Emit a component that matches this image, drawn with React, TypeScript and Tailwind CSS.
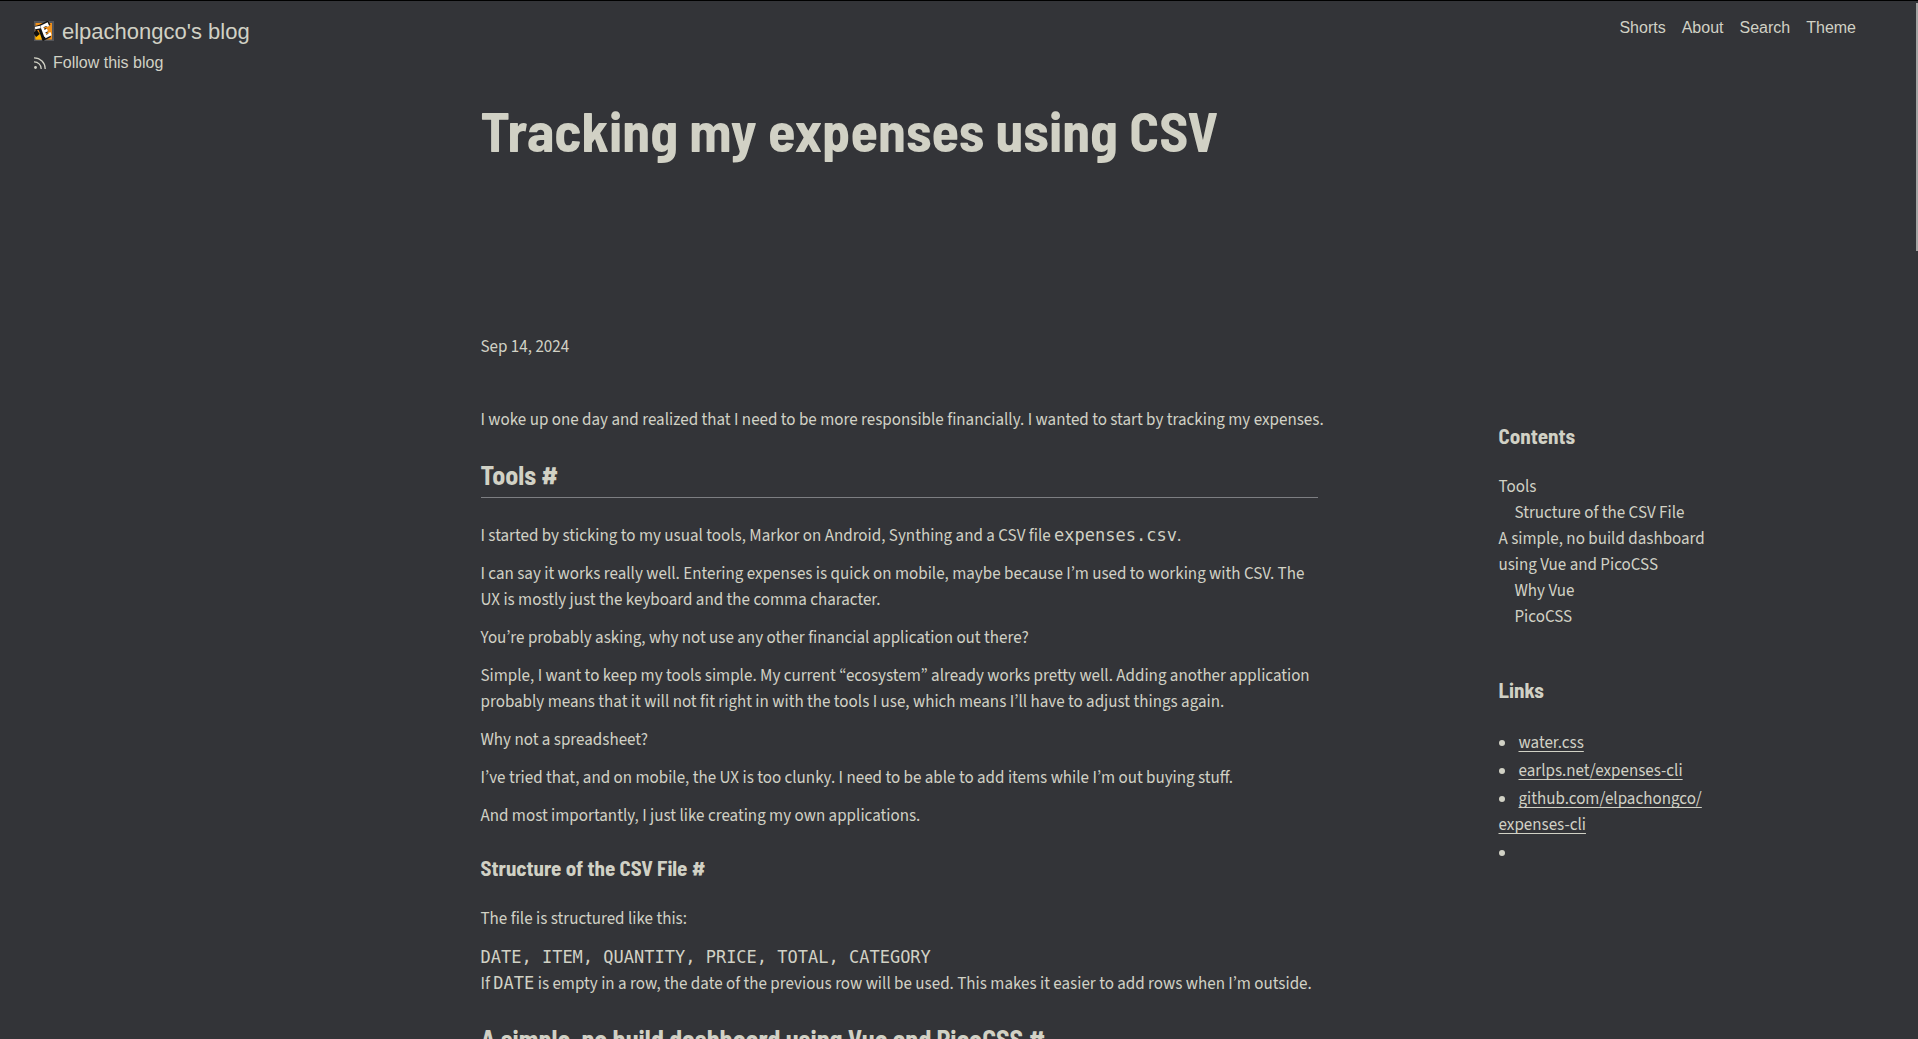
import type { ReactNode } from "react";

const heading = "font-['Barlow_Semi_Condensed','Roboto_Condensed',sans-serif] font-bold";
const mono = "font-['DejaVu_Sans_Mono',monospace]";

const nav = ["Shorts", "About", "Search", "Theme"];

const contents = [
  { label: "Tools", nested: false },
  { label: "Structure of the CSV File", nested: true },
  { label: "A simple, no build dashboard using Vue and PicoCSS", nested: false },
  { label: "Why Vue", nested: true },
  { label: "PicoCSS", nested: true },
];

const links = ["water.css", "earlps.net/expenses-cli", "github.com/elpachongco/\u200bexpenses-cli"];

function Favicon() {
  return (
    <svg viewBox="0 0 20 20" className="size-5" aria-hidden="true">
      <rect width="20" height="20" fill="#55565a" />
      <rect x="1.5" y="2" width="16.5" height="16.5" fill="#f0901a" />
      <path d="M1.5 11h6v7.5h-6z" fill="#ffb400" />
      <g fill="none" strokeLinejoin="miter">
        <path d="M1 7.500l5-1.500 4 11 6-3M6 6l7-3.500 1.500 2.500M8 11.500l5-2.500M1 10.500l3 4" stroke="#111" strokeWidth="4.600" />
        <path d="M1 7l5.500-1M8 6l3.500 9.500M7 6l6-3 1 2.500M9 11l4.500-2M11 16l5-2.500-.5-2" stroke="#fff" strokeWidth="2.600" />
      </g>
    </svg>
  );
}

function RssIcon() {
  return (
    <svg viewBox="0 0 12 12" className="size-3" fill="none" stroke="currentColor" strokeWidth="1.3" aria-hidden="true">
      <path d="M0 0.8A11 11 0 0 1 11.2 12" />
      <path d="M0 4.8A7 7 0 0 1 7.2 12" />
      <circle cx="1.5" cy="10.5" r="1.4" fill="currentColor" stroke="none" />
    </svg>
  );
}

function P({ children }: { children: ReactNode }) {
  return <p className="mb-3">{children}</p>;
}

export default function App() {
  return (
    <div className="relative min-h-screen border-t border-black bg-[#333438] font-['Source_Sans_3','Noto_Sans_CJK_SC',sans-serif] text-[17px] leading-[26px] text-[#d1d1c5]">
      <header className="flex items-start justify-between pt-[15px] pr-[62px] pl-[34px] font-['Liberation_Sans',sans-serif] text-base">
        <div>
          <a href="#home" className="flex h-[30px] items-center gap-2 text-[22px]">
            <Favicon />
            elpachongco's blog
          </a>
          <a href="#follow" className="mt-0.5 flex h-[30px] items-center gap-[7px]">
            <RssIcon />
            Follow this blog
          </a>
        </div>
        <nav className="-mt-[3px] flex gap-4">
          {nav.map((n) => (
            <a key={n} href={`#${n.toLowerCase()}`} className="leading-[30px]">
              {n}
            </a>
          ))}
        </nav>
      </header>

      <div className="ml-px flex items-start pt-[17px] pl-[25%]">
        <main className="w-full max-w-[837px]">
          <h1 className={`${heading} text-[56px] leading-[70px]`}>Tracking my expenses using CSV</h1>
          <p className="mt-[169px]">Sep 14, 2024</p>
          <p className="mt-[47px] whitespace-nowrap">
            I woke up one day and realized that I need to be more responsible financially. I wanted to start by tracking
            my expenses.
          </p>
          <h2 className={`${heading} mt-6 mb-6 border-b border-[#7d7e82] pb-1 text-[26px] leading-9`}>Tools #</h2>
          <P>
            I started by sticking to my usual tools, Markor on Android, Synthing and a CSV file{" "}
            <code className={mono}>expenses.csv</code>.
          </P>
          <P>
            I can say it works really well. Entering expenses is quick on mobile, maybe because I’m used to working with
            CSV. The UX is mostly just the keyboard and the comma character.
          </P>
          <P>You’re probably asking, why not use any other financial application out there?</P>
          <P>
            Simple, I want to keep my tools simple. My current “ecosystem” already works pretty well. Adding another
            application probably means that it will not fit right in with the tools I use, which means I’ll have to
            adjust things again.
          </P>
          <P>Why not a spreadsheet?</P>
          <P>I’ve tried that, and on mobile, the UX is too clunky. I need to be able to add items while I’m out buying stuff.</P>
          <P>And most importantly, I just like creating my own applications.</P>
          <h3 className={`${heading} mt-[26px] mb-[25px] text-[21px] leading-[26px]`}>Structure of the CSV File #</h3>
          <P>The file is structured like this:</P>
          <pre className={mono}>DATE, ITEM, QUANTITY, PRICE, TOTAL, CATEGORY</pre>
          <p>
            If <code className={mono}>DATE</code> is empty in a row, the date of the previous row will be used. This
            makes it easier to add rows when I’m outside.
          </p>
          <h2 className={`${heading} mt-6 border-b border-[#7d7e82] pb-1 text-[26px] leading-9`}>
            A simple, no build dashboard using Vue and PicoCSS #
          </h2>
        </main>

        <aside className="mt-[328px] ml-[181px] w-[216px] shrink-0">
          <h3 className={`${heading} text-[21px] leading-[26px]`}>Contents</h3>
          <ul className="mt-[25px]">
            {contents.map((c) => (
              <li key={c.label} className={c.nested ? "pl-4" : ""}>
                <a href="#section">{c.label}</a>
              </li>
            ))}
          </ul>
          <h3 className={`${heading} mt-[47px] text-[21px] leading-[26px]`}>Links</h3>
          <ul className="mt-[27px] flex list-inside list-disc flex-col gap-0.5">
            {links.map((l) => (
              <li key={l}>
                <a
                  href="#link"
                  className="-ml-1 underline decoration-1 underline-offset-[3px] [text-decoration-skip-ink:none]"
                >
                  {l}
                </a>
              </li>
            ))}
            <li />
          </ul>
        </aside>
      </div>

      <div className="absolute top-[2px] right-0 h-[248px] w-0.5 bg-[#a3a3a3]" />
    </div>
  );
}
